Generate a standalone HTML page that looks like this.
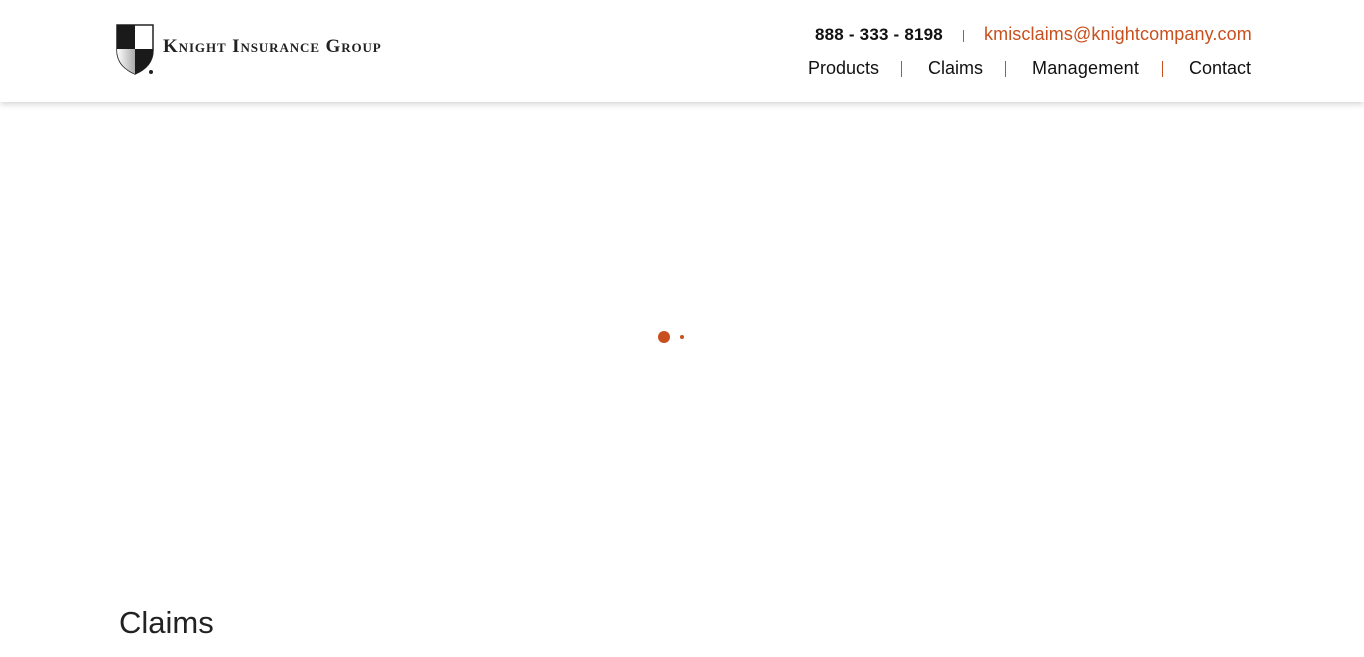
<!DOCTYPE html>
<html><head><style>
body{margin:0;width:1364px;height:657px;background:#fff;overflow:hidden;font-family:"Liberation Sans",sans-serif;position:relative}
.hdr{position:absolute;left:0;top:0;width:1364px;height:102px;background:#fff;box-shadow:0 2px 6px rgba(0,0,0,.18)}
.a{position:absolute;white-space:nowrap}
.sep{position:absolute;width:1px;background:#c8501e}
</style></head><body>
<div class="hdr">
<svg class="a" style="left:116px;top:24px" width="40" height="52" viewBox="0 0 40 52">
<defs><linearGradient id="g" x1="0" x2="1"><stop offset="0" stop-color="#fff"/><stop offset="1" stop-color="#aaa"/></linearGradient></defs>
<path d="M1 1H37V26C37 38 30 45 19 50C8 45 1 38 1 26Z" fill="#fff" stroke="#222" stroke-width="1.5"/>
<path d="M1 1H19V25H1Z" fill="#1a1a1a"/>
<path d="M19 25H37C37 38 30 45 19 50Z" fill="#1a1a1a"/>
<path d="M1 25H19V50C8 45 1 38 1 25Z" fill="url(#g)"/>
<circle cx="35" cy="48" r="2" fill="#222"/>
</svg>
<div class="a" style="left:163px;top:36px;font-family:'Liberation Serif',serif;font-weight:bold;font-size:19px;font-variant:small-caps;color:#222;letter-spacing:0.9px">Knight Insurance Group</div>
<div class="a" style="left:815px;top:25px;font-size:17px;font-weight:bold;color:#111;letter-spacing:0.2px">888 - 333 - 8198</div>
<div class="sep" style="left:963px;top:30px;height:12px"></div>
<div class="a" style="left:984px;top:24px;font-size:18px;color:#c8501e;letter-spacing:0.1px">kmisclaims@knightcompany.com</div>
<div class="a" style="left:808px;top:58px;font-size:18px;color:#111">Products</div>
<div class="sep" style="left:901px;top:61px;height:16px"></div>
<div class="a" style="left:928px;top:58px;font-size:18px;color:#111">Claims</div>
<div class="sep" style="left:1005px;top:61px;height:16px"></div>
<div class="a" style="left:1032px;top:58px;font-size:18px;color:#111;letter-spacing:0.2px">Management</div>
<div class="sep" style="left:1162px;top:61px;height:16px"></div>
<div class="a" style="left:1189px;top:58px;font-size:18px;color:#111">Contact</div>
</div>
<div class="a" style="left:658px;top:331px;width:12px;height:12px;border-radius:50%;background:#c8501e"></div>
<div class="a" style="left:680px;top:335px;width:4px;height:4px;border-radius:50%;background:#c8501e"></div>
<div class="a" style="left:119px;top:605px;font-size:31px;color:#222">Claims</div>
</body></html>
